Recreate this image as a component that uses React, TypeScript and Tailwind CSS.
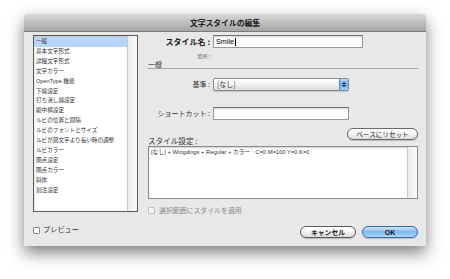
import React from 'react';

const jp = { fontFamily: '"Noto Sans CJK JP", "Noto Sans", sans-serif' };
const mixed = { fontFamily: '"Liberation Sans", "Noto Sans CJK JP", sans-serif' };

const items = [
  '一般',
  '基本文字形式',
  '詳細文字形式',
  '文字カラー',
  'OpenType 機能',
  '下線設定',
  '打ち消し線設定',
  '縦中横設定',
  'ルビの位置と間隔',
  'ルビのフォントとサイズ',
  'ルビが親文字より長い時の調整',
  'ルビカラー',
  '圏点設定',
  '圏点カラー',
  '斜体',
  '割注設定',
];

function Label({ children, bold }: { children: React.ReactNode; bold?: boolean }) {
  return (
    <div
      className={`w-[62px] shrink-0 text-right leading-none ${bold ? 'text-[8px] font-bold text-[#222]' : 'text-[7px] text-[#333]'}`}
      style={jp}
    >
      {children}
    </div>
  );
}

function Field({ w, children }: { w: string; children?: React.ReactNode }) {
  return (
    <div
      className={`${w} h-[13px] ml-[3px] bg-white border border-[#9a9a9a] border-t-[#707070] shadow-[inset_0_1px_1px_rgba(0,0,0,0.15)] flex items-center px-[2px]`}
    >
      {children}
    </div>
  );
}

export default function App() {
  return (
    <div className="w-[450px] h-[279px] bg-white overflow-hidden pt-[14px] pl-[24px]" style={jp}>
      <div className="w-[402px] h-[232px] flex flex-col shadow-[0_7px_16px_rgba(0,0,0,0.5)] rounded-t-[3px]">
        {/* title bar */}
        <div className="h-[18px] bg-gradient-to-b from-[#d9d9d9] to-[#a6a6a6] border-b border-[#7a7a7a] rounded-t-[3px] flex items-center justify-center">
          <span className="text-[7.8px] font-bold text-[#222] leading-none">文字スタイルの編集</span>
        </div>

        {/* body */}
        <div className="flex-1 bg-[#e8e8e8] flex pl-[9px] pt-[3px]">
          {/* left column */}
          <div className="w-[105px] flex flex-col">
            <div className="h-[177px] border border-[#5a5a5a] bg-white flex shadow-[inset_0_1px_2px_rgba(0,0,0,0.3)]">
              <div className="flex-1 pt-[1px]">
                {items.map((t, i) => (
                  <div
                    key={t}
                    className={`h-[9.9px] flex items-center pl-[2px] text-[5.6px] leading-none text-[#333] whitespace-nowrap ${i === 0 ? 'bg-[#b7d4fb]' : ''}`}
                    style={mixed}
                  >
                    {t}
                  </div>
                ))}
              </div>
              <div className="w-[10px] border-l border-[#c8c8c8] bg-gradient-to-r from-[#ececec] to-[#fafafa]" />
            </div>
            <div className="mt-[14px] flex items-center h-[8px]">
              <div className="w-[7px] h-[7px] border border-[#8a8a8a] bg-white rounded-[1px]" />
              <span className="ml-[3px] text-[7.2px] leading-none text-[#333]">プレビュー</span>
            </div>
          </div>

          {/* right column */}
          <div className="ml-[10px] w-[270px] flex flex-col">
            <div className="flex items-center h-[13px]">
              <Label bold>スタイル名 :</Label>
              <Field w="w-[150px]">
                <span className="text-[7.2px] leading-none text-black" style={mixed}>Smile</span>
                <span className="w-px h-[8px] bg-black ml-px" />
              </Field>
            </div>
            <div className="h-[8px] mt-[3px] flex items-center">
              <div className="w-[62px] text-right text-[5px] text-[#666] leading-none">場所 :</div>
            </div>
            <div className="h-[9px] mt-px border-b border-[#a8a8a8] flex items-center">
              <span className="text-[7px] leading-none text-[#333]">一般</span>
            </div>

            <div className="flex items-center mt-[9px] h-[13px]">
              <Label>基準 :</Label>
              <div className="ml-[3px] w-[136px] h-[13px] border border-[#8a8a8a] rounded-[2px] flex bg-gradient-to-b from-white via-[#f2f2f2] to-[#dcdcdc] shadow-[0_1px_1px_rgba(0,0,0,0.15)]">
                <div className="flex-1 flex items-center pl-[3px]">
                  <span className="text-[7px] leading-none text-[#333]">[なし]</span>
                </div>
                <div className="w-[9px] bg-gradient-to-b from-[#b6dafb] via-[#6aaaf0] to-[#9cd0fb] border-l border-[#5a88c0] rounded-r-[1px] flex flex-col items-center justify-center gap-[1px]">
                  <div className="w-0 h-0 border-l-[2px] border-r-[2px] border-b-[2px] border-l-transparent border-r-transparent border-b-[#1a1a1a]" />
                  <div className="w-0 h-0 border-l-[2px] border-r-[2px] border-t-[2px] border-l-transparent border-r-transparent border-t-[#1a1a1a]" />
                </div>
              </div>
            </div>

            <div className="flex items-center mt-[16px] h-[13px]">
              <Label>ショートカット :</Label>
              <Field w="w-[136px]" />
            </div>

            <div className="flex justify-between mt-[8px] h-[17px]">
              <span className="self-end text-[7.6px] leading-none text-[#333]">スタイル設定 :</span>
              <button className="self-start w-[71px] h-[12px] rounded-full border border-[#6a6a6a] bg-gradient-to-b from-white via-[#f4f4f4] to-[#dadada] flex items-center justify-center shadow-[0_1px_1px_rgba(0,0,0,0.2)]">
                <span className="text-[6.6px] leading-none text-[#222]">ベースにリセット</span>
              </button>
            </div>

            <div className="mt-px h-[53px] border border-[#8a8a8a] bg-white flex shadow-[inset_0_1px_2px_rgba(0,0,0,0.2)]">
              <div
                className="flex-1 pl-[2px] pt-[3px] text-[5.8px] leading-none text-[#333] whitespace-nowrap"
                style={mixed}
              >
                [なし] + Wingdings + Regular + カラー : C=0 M=100 Y=0 K=0
              </div>
              <div className="w-[10px] border-l border-[#c8c8c8] bg-gradient-to-r from-[#ececec] to-[#fafafa]" />
            </div>

            <div className="mt-[7px] h-[8px] flex items-center">
              <div className="w-[7px] h-[7px] border border-[#c0c0c0] bg-[#f4f4f4] rounded-[1px]" />
              <span className="ml-[4px] text-[6.9px] leading-none text-[#8a8a8a]">選択範囲にスタイルを適用</span>
            </div>

            <div className="mt-[12px] flex justify-end gap-[6px]">
              <button className="w-[56px] h-[12px] rounded-full border border-[#5a5a5a] bg-gradient-to-b from-white via-[#f4f4f4] to-[#d8d8d8] flex items-center justify-center shadow-[0_1px_1px_rgba(0,0,0,0.2)]">
                <span className="text-[6.8px] font-bold leading-none text-[#222]">キャンセル</span>
              </button>
              <button className="w-[56px] h-[12px] rounded-full border border-[#3a6aa8] bg-gradient-to-b from-[#cfe6fb] via-[#7db9f0] to-[#a9d6fb] flex items-center justify-center shadow-[0_1px_1px_rgba(0,0,0,0.2)]">
                <span className="text-[7px] font-bold leading-none text-[#111]" style={mixed}>OK</span>
              </button>
            </div>
          </div>
        </div>
      </div>
    </div>
  );
}
